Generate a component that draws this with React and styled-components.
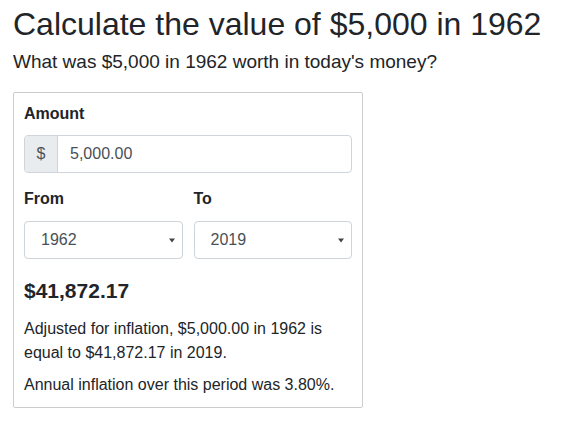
import React from 'react';
import styled, { createGlobalStyle } from 'styled-components';

const GlobalStyle = createGlobalStyle`
  *, *::before, *::after { box-sizing: border-box; }
  body {
    margin: 0;
    background: #fff;
    font-family: "Liberation Sans", Arial, sans-serif;
    color: #212529;
    font-size: 16px;
  }
`;

const Page = styled.div`
  padding: 5px 13px 0;
`;

const Title = styled.h1`
  margin: 0;
  font-size: 32px;
  font-weight: 400;
  line-height: 38px;
`;

const Subtitle = styled.p`
  margin: 7px 0 19px;
  font-size: 19px;
  line-height: 23px;
`;

const Card = styled.div`
  width: 350px;
  border: 1px solid #ccc;
  border-radius: 2px;
  padding: 11px 10px 10px;
`;

const Label = styled.div`
  font-weight: 700;
  font-size: 16px;
  line-height: 20px;
  margin-bottom: ${p => p.$gap || 11}px;
`;

const InputGroup = styled.div`
  display: flex;
  height: 38px;
  border: 1px solid #ced4da;
  border-radius: 4px;
  overflow: hidden;
  margin-bottom: 16px;
`;

const Addon = styled.div`
  width: 33px;
  display: flex;
  align-items: center;
  justify-content: center;
  background: #e9ecef;
  border-right: 1px solid #ced4da;
  color: #495057;
`;

const Value = styled.div`
  flex: 1;
  display: flex;
  align-items: center;
  padding-left: 12px;
  color: #495057;
`;

const Row = styled.div`
  display: grid;
  grid-template-columns: 1fr 1fr;
  gap: 11px;
`;

const Select = styled.div`
  height: 38px;
  border: 1px solid #ced4da;
  border-radius: 4px;
  display: flex;
  align-items: center;
  justify-content: space-between;
  padding: 0 7px 0 16px;
  color: #495057;
`;

const Caret = () => (
  <svg width="6" height="5" viewBox="0 0 6 5">
    <path d="M0 0.5 L6 0.5 L3 4.5 Z" fill="#444" />
  </svg>
);

const Result = styled.div`
  font-size: 21px;
  font-weight: 700;
  margin: 19px 0 14px;
  line-height: 25px;
`;

const Text = styled.p`
  margin: 0 0 ${p => p.$gap || 0}px;
  line-height: 24px;
`;

export default function App() {
  return (
    <Page>
      <GlobalStyle />
      <Title>Calculate the value of $5,000 in 1962</Title>
      <Subtitle>What was $5,000 in 1962 worth in today's money?</Subtitle>
      <Card>
        <Label>Amount</Label>
        <InputGroup>
          <Addon>$</Addon>
          <Value>5,000.00</Value>
        </InputGroup>
        <Row>
          <div>
            <Label $gap={12}>From</Label>
            <Select>1962<Caret /></Select>
          </div>
          <div>
            <Label $gap={12}>To</Label>
            <Select>2019<Caret /></Select>
          </div>
        </Row>
        <Result>$41,872.17</Result>
        <Text $gap={8}>Adjusted for inflation, $5,000.00 in 1962 is equal to $41,872.17 in 2019.</Text>
        <Text>Annual inflation over this period was 3.80%.</Text>
      </Card>
    </Page>
  );
}
